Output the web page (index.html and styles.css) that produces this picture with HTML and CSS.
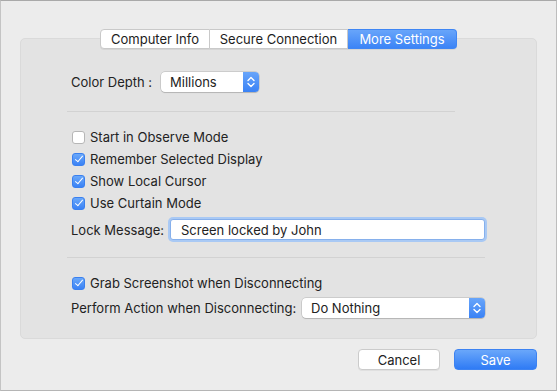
FILE: index.html
```html
<!DOCTYPE html>
<html>
<head>
  <title>Screen Sharing - More Settings</title>
  <link rel="stylesheet" href="styles.css">
</head>
<body>
  <div class="window">
    <div class="tabs">
      <button class="tab tab-info">Computer Info</button>
      <button class="tab tab-secure">Secure Connection</button>
      <button class="tab tab-more active">More Settings</button>
    </div>

    <div class="group">
      <div class="row color-row">
        <span class="label">Color Depth :</span>
        <div class="popup popup-depth">
          <span class="popup-text">Millions</span>
          <span class="popup-arrows">
            <svg width="8" height="12" viewBox="0 0 8 12"><path d="M1 4.5 L4 1.5 L7 4.5 M1 7.5 L4 10.5 L7 7.5" fill="none" stroke="#fff" stroke-width="1.4" stroke-linecap="round" stroke-linejoin="round"/></svg>
          </span>
        </div>
      </div>

      <div class="sep"></div>

      <label class="check-row"><span class="box"></span>Start in Observe Mode</label>
      <label class="check-row"><span class="box checked"></span>Remember Selected Display</label>
      <label class="check-row"><span class="box checked"></span>Show Local Cursor</label>
      <label class="check-row"><span class="box checked"></span>Use Curtain Mode</label>

      <div class="row lock-row">
        <span class="label">Lock Message:</span>
        <input class="field" type="text" value="Screen locked by John">
      </div>

      <div class="sep sep-wide"></div>

      <label class="check-row"><span class="box checked"></span>Grab Screenshot when Disconnecting</label>

      <div class="row action-row">
        <span class="label">Perform Action when Disconnecting:</span>
        <div class="popup popup-action">
          <span class="popup-text">Do Nothing</span>
          <span class="popup-arrows">
            <svg width="8" height="12" viewBox="0 0 8 12"><path d="M1 4.5 L4 1.5 L7 4.5 M1 7.5 L4 10.5 L7 7.5" fill="none" stroke="#fff" stroke-width="1.4" stroke-linecap="round" stroke-linejoin="round"/></svg>
          </span>
        </div>
      </div>
    </div>

    <div class="actions">
      <button class="btn btn-cancel">Cancel</button>
      <button class="btn btn-save">Save</button>
    </div>
  </div>
</body>
</html>
```

FILE: styles.css
```css
* {
  margin: 0;
  padding: 0;
  box-sizing: border-box;
}

body {
  font-family: Inter, 'Liberation Sans', sans-serif;
  font-size: 13px;
  color: #222;
  background: #9a9a9a;
}

.window {
  width: 557px;
  height: 391px;
  background: #ececec;
  border-top: 1px solid #a9a9a9;
  border-left: 1px solid #c4c4c4;
  border-right: 1px solid #bdbdbd;
  border-bottom: 1px solid #b5b5b5;
  padding: 28px 19px 0 19px;
}

/* segmented control */
.tabs {
  display: flex;
  justify-content: center;
  position: relative;
  z-index: 1;
  margin-bottom: -11px;
}

.tab {
  height: 20px;
  font-family: inherit;
  font-size: 13px;
  color: #1d1d1d;
  background: #fff;
  border: 1px solid #c9c9c9;
  border-left: none;
  box-shadow: 0 1px 0 rgba(0, 0, 0, 0.06);
}

.tab-info {
  width: 110px;
  border-left: 1px solid #c9c9c9;
  border-radius: 4px 0 0 4px;
}

.tab-secure {
  width: 138px;
}

.tab-more {
  width: 109px;
  border-radius: 0 4px 4px 0;
}

.tab.active {
  color: #fff;
  background: linear-gradient(#68a5fa, #3c84f6);
  border-color: #3f86f4;
}

/* group box */
.group {
  background: #e3e3e3;
  border: 1px solid #dadada;
  border-radius: 5px;
  padding: 33px 51px 20px 46px;
}

.row {
  display: flex;
  align-items: center;
  padding-left: 4px;
}

.label {
  color: #222;
  white-space: nowrap;
  flex-shrink: 0;
}

.color-row {
  height: 20px;
}

.color-row .label {
  margin-right: 9px;
}

.popup {
  height: 20px;
  display: flex;
  flex-shrink: 0;
  background: #fff;
  border-radius: 4px;
  box-shadow: 0 0 0 0.5px rgba(0, 0, 0, 0.2), 0 1px 1px rgba(0, 0, 0, 0.12);
  overflow: hidden;
}

.popup-text {
  flex: 1;
  padding-left: 9px;
  line-height: 20px;
}

.popup-arrows {
  width: 16px;
  display: flex;
  align-items: center;
  justify-content: center;
  background: linear-gradient(#68a5fa, #3a82f5);
}

.popup-depth {
  width: 98px;
}

.popup-action {
  width: 183px;
  margin-left: auto;
}

.sep {
  height: 1px;
  background: #d2d2d2;
  width: 388px;
  margin: 19px 0 14px;
}

.sep-wide {
  width: 418px;
  margin: 16px 0 14px;
}

.check-row {
  display: flex;
  align-items: center;
  height: 22px;
  padding-left: 5px;
  white-space: nowrap;
}

.box {
  width: 13px;
  height: 13px;
  flex-shrink: 0;
  border-radius: 3px;
  background: #fff;
  border: 1px solid #b6b6b6;
  margin-right: 5px;
  position: relative;
}

.box.checked {
  background: linear-gradient(#6aa8fa, #3a82f5);
  border-color: #3a80ef;
}

.box.checked::after {
  content: '';
  position: absolute;
  left: 3.5px;
  top: 0.5px;
  width: 3px;
  height: 7px;
  border-right: 1.6px solid #fff;
  border-bottom: 1.6px solid #fff;
  transform: rotate(40deg);
}

.lock-row {
  height: 23px;
  margin-top: 4px;
}

.field {
  width: 315px;
  height: 21px;
  margin-left: auto;
  font-family: inherit;
  font-size: 13px;
  color: #222;
  padding-left: 10px;
  background: #fff;
  border: 1px solid #86b0ec;
  border-radius: 3px;
  box-shadow: 0 0 0 2px #a9c9f4;
  outline: none;
}

.action-row {
  height: 20px;
  margin-top: 4px;
}

/* bottom buttons */
.actions {
  display: flex;
  justify-content: flex-end;
  gap: 14px;
  margin-top: 10px;
}

.btn {
  height: 21px;
  font-family: inherit;
  font-size: 13px;
  border-radius: 4px;
}

.btn-cancel {
  width: 82px;
  color: #222;
  background: #fff;
  border: 1px solid #cbcbcb;
  box-shadow: 0 1px 0 rgba(0, 0, 0, 0.05);
}

.btn-save {
  width: 83px;
  color: #fff;
  background: linear-gradient(#6aa7fa, #2f7bf5);
  border: 1px solid #3d83f2;
}
```
